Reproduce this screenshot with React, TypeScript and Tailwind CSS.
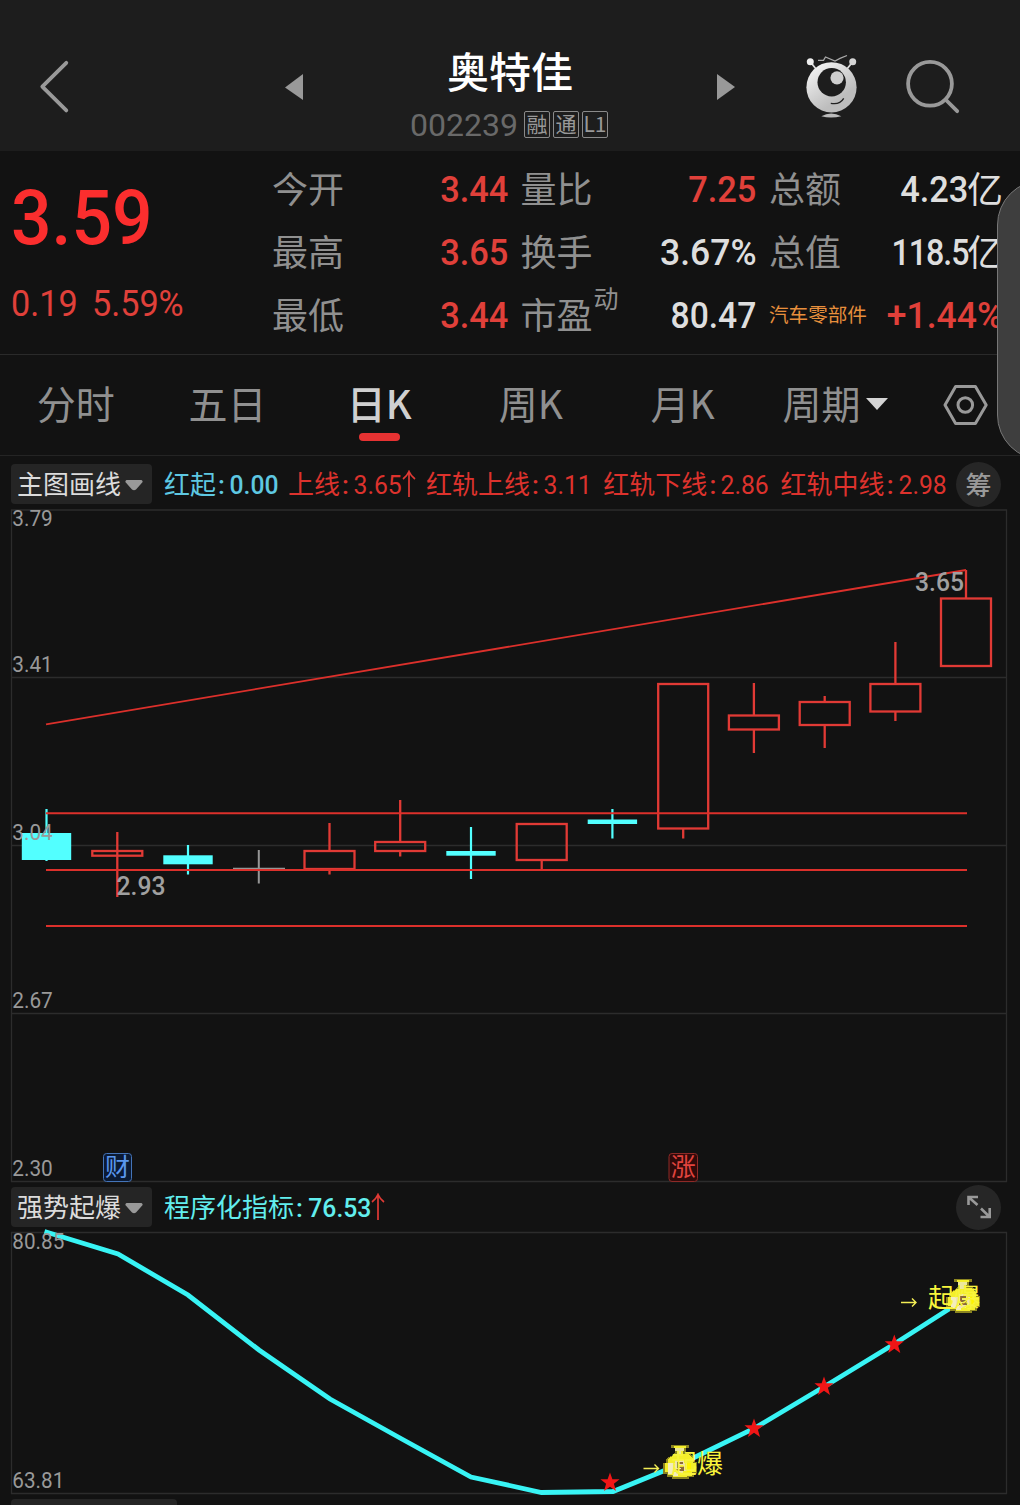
import React from 'react';
import clsx from 'clsx';

const RED = '#e13a35';
const CYAN = '#52ffff';
const GRAY = '#999999';

interface Quote {
  label: string;
  value: string;
  tone: string;
  sup?: string;
  unit?: string;
  small?: boolean;
  fit?: string;
}

const quotes: Quote[][] = [
  [
    { label: '今开', value: '3.44', tone: 'text-[#e0403a]' },
    { label: '量比', value: '7.25', tone: 'text-[#e0403a]' },
    { label: '总额', value: '4.23', tone: 'text-[#dedede]', unit: '亿' },
  ],
  [
    { label: '最高', value: '3.65', tone: 'text-[#e0403a]' },
    { label: '换手', value: '3.67%', tone: 'text-[#dedede]', fit: 'scale-x-[0.96]' },
    { label: '总值', value: '118.5', tone: 'text-[#dedede]', unit: '亿', fit: 'scale-x-[0.87] tracking-[-1.2px]' },
  ],
  [
    { label: '最低', value: '3.44', tone: 'text-[#e0403a]' },
    { label: '市盈', value: '80.47', tone: 'text-[#dedede]', sup: '动', fit: 'scale-x-[0.91]' },
    { label: '汽车零部件', value: '+1.44%', tone: 'text-[#e0403a]', small: true, fit: 'scale-x-[0.96]' },
  ],
];

const tabs = ['分时', '五日', '日K', '周K', '月K'];

const lines = [
  { label: '红轨上线', value: '3.11' },
  { label: '红轨下线', value: '2.86' },
  { label: '红轨中线', value: '2.98' },
];

// x centre, wick top, body top, body bottom, wick bottom
const redCandles = [
  [117.3, 832, 851, 855.7, 897],
  [329.5, 823, 851, 869, 874.5],
  [400.2, 800, 842, 851, 856.5],
  [541.7, 824, 824, 860, 869],
  [683.2, 684, 684, 828.5, 838.5],
  [753.9, 683, 715.5, 729.5, 753],
  [824.7, 696, 702, 725, 748],
  [895.4, 642, 684, 711.5, 721],
  [966, 570, 598.5, 666, 666],
];

const cyanCandles = [
  [46.5, 809, 833, 860, 861],
  [188, 845, 855.3, 864.3, 874.5],
  [471, 827, 851, 855.7, 879],
  [612.4, 809, 819.5, 824, 838.5],
];

const stars = [
  [610, 1482.5],
  [754, 1428.5],
  [824, 1386.5],
  [894.3, 1344.5],
];

function Header() {
  return (
    <header className="flex h-[151px] items-start bg-[#1d1d1d]">
      <svg className="mt-[56px] ml-[36px] h-[62px] w-[36px]" viewBox="36 56 36 62" fill="none">
        <path d="M66.3 62.8 42.3 86.6 66.3 110.4" stroke={GRAY} strokeWidth="3.8" strokeLinecap="round" strokeLinejoin="round" />
      </svg>
      <svg className="mt-[74px] ml-[212px] h-[27px] w-[20px]" viewBox="284 74 20 27">
        <path d="M285 87.5 303 74V100Z" fill={GRAY} />
      </svg>
      <div className="mt-[45px] flex w-[412px] flex-col items-center">
        <h1 className="h-[50px] text-[42px] leading-[50px] font-medium text-white">奥特佳</h1>
        <div className="mt-[13px] flex h-[32px] items-center pr-[2px]">
          <span className="mr-[6px] pt-[2px] font-[Roboto] text-[32px] leading-[32px] text-[#696969]">002239</span>
          <div className="flex gap-[3px]">
            {['融', '通', 'L1'].map((badge) => (
              <span key={badge} className="flex h-[27px] w-[26px] items-center justify-center rounded-[2px] border border-[#8a8a8a] pb-[2px] text-[21px] leading-none text-[#999999]">
                {badge}
              </span>
            ))}
          </div>
        </div>
      </div>
      <svg className="mt-[74px] h-[27px] w-[20px]" viewBox="716 74 20 27">
        <path d="M735 87 717 74V100Z" fill={GRAY} />
      </svg>
      <svg className="mt-[52px] ml-[68px] h-[68px] w-[56px]" viewBox="804 52 56 68" fill="none">
        <defs>
          <linearGradient id="body" x1="0" y1="0" x2="0.7" y2="1">
            <stop offset="0.1" stopColor="#f4f4f4" />
            <stop offset="0.8" stopColor="#bdbdbd" />
          </linearGradient>
        </defs>
        <path d="M818 60.3H823.5L825.5 57 835 61 840 58.4 847 55.5" stroke="#aaa" strokeWidth="1.3" />
        <path d="M810.3 61.7 816 69M852.7 61.7 847 69" stroke="#ddd" strokeWidth="1.8" />
        <circle cx="810.3" cy="61.7" r="3.5" fill="#eee" />
        <circle cx="852.7" cy="61.7" r="3.5" fill="#d5d5d5" />
        <circle cx="831.5" cy="87.3" r="25.1" fill="url(#body)" />
        <circle cx="831.7" cy="82.2" r="14.2" fill="#1d1d1d" />
        <circle cx="837" cy="77.8" r="6.6" fill="#cfcfcf" />
        <path d="M830.8 103.3Q839.5 105.2 843.7 98.3" stroke="#222" strokeWidth="1.3" />
        <path d="M821.3 116.2Q831 110.8 841.3 116.2Q831 119 821.3 116.2Z" fill="#bbb" />
      </svg>
      <svg className="mt-[56px] ml-[42px] h-[60px] w-[60px]" viewBox="902 56 60 60" fill="none" stroke={GRAY}>
        <circle cx="930" cy="83.8" r="21.9" strokeWidth="3.8" />
        <path d="M945.5 99.5 957.2 111.2" strokeWidth="3.8" strokeLinecap="round" />
      </svg>
    </header>
  );
}

function QuoteCell({ quote }: { quote: Quote }) {
  return (
    <div className="flex h-[63px] items-center justify-between">
      <span className={clsx('relative', quote.small ? 'pb-[2px] text-[19.6px] text-[#e78f3c]' : 'pb-[4px] text-[36px] leading-[50px] text-[#909090]')}>
        {quote.label}
        {quote.sup && <sup className="absolute top-[-5px] left-[73px] text-[25px] leading-[28px]">{quote.sup}</sup>}
      </span>
      <span className={clsx('flex items-center font-[Roboto] text-[37px] leading-[50px] font-medium whitespace-nowrap', quote.tone)}>
        <span className={clsx('origin-right pt-[2px]', quote.fit || 'scale-x-[0.93]')}>{quote.value}</span>
        {quote.unit && <span className="ml-[-1px] pb-[4px] font-['Noto_Sans_CJK_SC'] text-[36px] font-normal">{quote.unit}</span>}
      </span>
    </div>
  );
}

function QuotePanel() {
  return (
    <section className="flex h-[204px] border-b border-[#2a2a2a] bg-[#121212]">
      <div className="w-[272px] pl-[11px] font-[Roboto]">
        <div className="mt-[29px] origin-left scale-x-[0.94] text-[76px] leading-[76px] font-medium text-[#fb2e2e]">3.59</div>
        <div className="mt-[25px] flex origin-left scale-x-[0.95] gap-[15px] text-[36px] leading-[46px] font-[450] text-[#e0403a]">
          <span>0.19</span>
          <span>5.59%</span>
        </div>
      </div>
      <div className="grid h-[189px] grid-cols-[236px_236px_234px] gap-x-[12.5px] pt-[6px]">
        {quotes.flat().map((quote) => (
          <QuoteCell key={quote.label} quote={quote} />
        ))}
      </div>
    </section>
  );
}

function Tabs() {
  return (
    <nav className="flex h-[101px] border-b border-[#242424] text-[39px] leading-[56px] text-[#909090]">
      {tabs.map((tab) => (
        <div key={tab} className={clsx('flex w-[151.7px] flex-col items-center pt-[19px]', tab === '日K' && 'font-medium text-[#d0d0d0]')}>
          {tab}
          {tab === '日K' && <span className="mt-[3px] h-[8px] w-[41px] rounded-full bg-[#e63232]" />}
        </div>
      ))}
      <div className="ml-[24px] flex h-[56px] items-center pt-[38px]">
        周期
        <svg className="mt-[4px] ml-[6px] h-[12px] w-[22px]" viewBox="0 0 22 12">
          <path d="M0 0H22L11 12Z" fill="#d4d4d4" />
        </svg>
      </div>
      <svg className="mt-[28px] ml-[54px] h-[44px] w-[46px]" viewBox="942 383 46 44" fill="none" stroke={GRAY} strokeWidth="3">
        <path d="M945 405 955.6 386.5H975.4L986.2 405 975.4 423.5H955.6Z" strokeLinejoin="round" />
        <circle cx="965.3" cy="405" r="7.3" />
      </svg>
    </nav>
  );
}

function IndicatorPill({ name }: { name: string }) {
  return (
    <div className="flex h-[40px] w-[141px] shrink-0 items-center rounded-[4px] bg-[#252525] pl-[6px] text-[26px] leading-[38px] text-[#dcdcdc]">
      <span className="pb-[3px]">{name}</span>
      <svg className="mt-[3px] ml-[4px] h-[11px] w-[18px]" viewBox="0 0 18 11">
        <path d="M1.5 0H16.5Q18.5 1.2 17 2.8L11 9.5Q9 11 7 9.5L1 2.8Q-.5 1.2 1.5 0Z" fill={GRAY} />
      </svg>
    </div>
  );
}

function Reading({ label, value, className, up, bold }: { label: string; value: string; className: string; up?: boolean; bold?: boolean }) {
  return (
    <span className={clsx('flex items-center whitespace-nowrap text-[26px] leading-[40px]', className)}>
      <span className="pb-[3px]">{label}</span>
      <span className="w-[11px] pt-[2px] text-center font-[Roboto] font-medium">:</span>
      <span className={clsx('origin-right scale-x-[0.95] pt-[2px] font-[Roboto]', bold ? 'font-medium' : 'font-normal')}>{value}</span>
      {up && (
        <svg className="h-[28px] w-[14px]" viewBox="0 0 14 28" fill="none" stroke={RED} strokeWidth="1.7">
          <path d="M7 27V2M1 9Q5 6 7 1.5Q9 6 13 9" />
        </svg>
      )}
    </span>
  );
}

function AxisLabel({ y, wide, children }: { y: number; wide?: boolean; children: string }) {
  return (
    <text x="12.3" y={y} fill="#999" fontFamily="Roboto" fontSize="22" fontWeight="450" textLength={wide ? 52 : 40.5} lengthAdjust="spacingAndGlyphs">
      {children}
    </text>
  );
}

function CandleChart() {
  return (
    <svg className="block h-[673px] w-[1020px] overflow-visible" viewBox="0 509 1020 673" fill="none">
      <g stroke="#2c2c2c" strokeWidth="1.3">
        <path d="M11.5 510H1006.5V1181.5H11.5Z" />
        <path d="M11 677.5H1007M11 845.5H1007M11 1013.5H1007" />
      </g>
      {cyanCandles.map(([x, high, top, bottom, low]) => (
        <g key={x} fill={CYAN}>
          <rect x={x - 1.1} y={high} width="2.2" height={low - high} />
          <rect x={x - 24.7} y={top} width="49.4" height={bottom - top} />
        </g>
      ))}
      <path d="M233 868.7H285M258.8 850V883.5" stroke="#969696" strokeWidth="2" />
      <g stroke={RED} strokeWidth="2.3">
        {redCandles.map(([x, high, top, bottom, low]) => (
          <g key={x}>
            <rect x={x - 25} y={top} width="50" height={bottom - top} />
            <path d={`M${x} ${high}V${top}M${x} ${bottom}V${low}`} />
          </g>
        ))}
        <path d="M117.3 851V856" />
      </g>
      <g stroke="#dc302b" strokeWidth="2">
        <path d="M46 813.2H967M46 870H967M46 926H967" />
        <path d="M46 724.3 966 570" strokeWidth="1.8" />
      </g>
      <AxisLabel y={526}>3.79</AxisLabel>
      <AxisLabel y={672}>3.41</AxisLabel>
      <AxisLabel y={840}>3.04</AxisLabel>
      <AxisLabel y={1008}>2.67</AxisLabel>
      <AxisLabel y={1176}>2.30</AxisLabel>
      <g fill="#a0a0a0" fontFamily="Roboto" fontSize="26" fontWeight="500">
        <text x="915" y="591" textLength="49" lengthAdjust="spacingAndGlyphs">3.65</text>
        <text x="116.5" y="895" textLength="49" lengthAdjust="spacingAndGlyphs">2.93</text>
      </g>
      <g fontFamily="Noto Sans CJK SC, sans-serif" fontSize="25" textAnchor="middle">
        <rect x="103.5" y="1153.5" width="28" height="28" rx="3" fill="#0b1a33" stroke="#4474b8" />
        <text x="117.5" y="1175.5" fill="#5a97ee">财</text>
        <rect x="669" y="1153.5" width="28.5" height="28" rx="3" fill="#300a0a" stroke="#8e2a27" />
        <text x="683.2" y="1175.5" fill="#e1443e">涨</text>
      </g>
    </svg>
  );
}

function MoneyBag({ x, y }: { x: number; y: number }) {
  return (
    <g transform={`translate(${x} ${y})`} shapeRendering="crispEdges">
      <path d="M8 0H26V3H23V8H26L31 13V17H34V28H31V32H26V34H9V32H4V29H0V18H3V14L8 11L12 8V3H8Z" fill="#8b8420" />
      <path d="M11 1H23V3H20V9H25L30 14V18H33V27H29V31H24V32H10V30H5V27H2V18H5V14L11 10H14V3H11Z" fill="#f4ef2a" />
      <path d="M12 3H21V6H18V10H14V6H12Z" fill="#ece79a" />
      <path d="M5 18H10V27H15V31H10V29H5Z" fill="#f3edbe" />
      <path d="M12 15H21V18H24V26H20V29H13V26H10V18H12Z" fill="#efe4ae" />
      <path d="M14 17H20V19H16V21H21V26H13V24H18V23H14Z" fill="#8a6a38" />
      <path d="M24 18H28V27H24Z" fill="#fff500" />
    </g>
  );
}

function TrendChart() {
  return (
    <svg className="block h-[262px] w-[1020px] overflow-visible" viewBox="0 1232 1020 262" fill="none">
      <path d="M11.5 1232.5H1006.5V1493.5H11.5Z" stroke="#2c2c2c" strokeWidth="1.3" />
      <path
        d="M44.5 1231.5 118 1254 188 1295 259 1350 330 1399 400 1438 471 1477 541.5 1492.5 613 1491.5 683 1463 754 1428.5 824.5 1386.5 895 1343.5 960 1302"
        stroke="#38f4f5"
        strokeWidth="4.8"
      />
      {stars.map(([x, y]) => (
        <path key={x} transform={`translate(${x} ${y})`} d="M0-10 2.4-3.2H9.6L3.9 1.2 6 8.6 0 4.3-6 8.6-3.9 1.2-9.6-3.2H-2.4Z" fill="#f01616" />
      ))}
      <g stroke="#f3ee55" strokeWidth="1.4">
        <path d="M643.5 1468.5H658.5M654.5 1464.5 658.5 1468.5 654.5 1472.5" />
        <path d="M901 1302.5H916M912 1298.5 916 1302.5 912 1306.5" />
      </g>
      <g fill="#f8f43c" fontFamily="Noto Sans CJK SC, sans-serif" fontSize="26">
        <MoneyBag x={663} y={1445} />
        <text x="671" y="1473">起爆</text>
        <MoneyBag x={946} y={1279} />
        <text x="928" y="1307">起爆</text>
      </g>
      <AxisLabel y={1249} wide>80.85</AxisLabel>
      <AxisLabel y={1488} wide>63.81</AxisLabel>
    </svg>
  );
}

export default function App() {
  return (
    <div className="relative h-[1505px] w-[1020px] overflow-hidden bg-[#121212] font-['Noto_Sans_CJK_SC',sans-serif]">
      <Header />
      <QuotePanel />
      <Tabs />

      <div className="flex h-[53px] items-center pt-[3px] pl-[11px]">
        <IndicatorPill name="主图画线" />
        <Reading label="红起" value="0.00" className="ml-[12px] w-[124px] text-[#5ec8e2]" bold />
        <Reading label="上线" value="3.65" className="w-[138px] text-[#dd322d]" up />
        {lines.map((line) => (
          <Reading key={line.label} label={line.label} value={line.value} className="w-[177.3px] text-[#dd322d]" />
        ))}
        <div className="ml-[-2px] flex size-[45px] shrink-0 items-center justify-center rounded-full bg-[#262626] text-[26px] leading-none font-medium text-[#999999]">
          筹
        </div>
      </div>
      <CandleChart />

      <div className="flex h-[50px] items-center pl-[11px]">
        <IndicatorPill name="强势起爆" />
        <Reading label="程序化指标" value="76.53" className="ml-[12px] text-[#62eeee]" up bold />
        <div className="mr-[19px] ml-auto flex size-[45px] items-center justify-center rounded-full bg-[#262626]">
          <svg className="size-[26px]" viewBox="965.5 1194 26 26" fill="none" stroke={GRAY} strokeWidth="2.6">
            <path d="M968 1205V1197H977.5M968 1197 977 1205" />
            <path d="M989.2 1208V1217H980M980.5 1208.5 989.2 1217" />
          </svg>
        </div>
      </div>
      <TrendChart />
      <div className="mt-[5px] ml-[11px] h-[40px] w-[166px] rounded-[4px] bg-[#252525]" />

      <div className="absolute top-[180px] left-[997px] h-[280px] w-[90px] rounded-[45px] border border-[#777777] bg-[#3e3e3e]" />
    </div>
  );
}
